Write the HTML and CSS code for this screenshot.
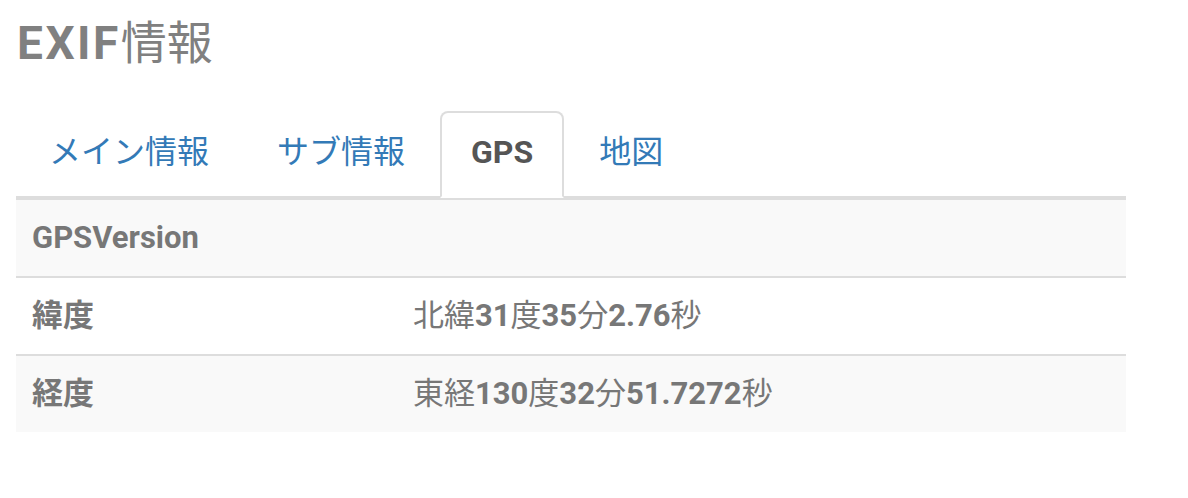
FILE: index.html
```html
<!DOCTYPE html>
<html lang="ja">
<head>
    <meta charset="UTF-8">
    <meta name="viewport" content="width=device-width, initial-scale=1.0">
    <title>EXIF情報</title>
    <link rel="stylesheet" href="styles.css">
</head>
<body>
    <div class="container">
        <h1 class="page-title"><b>EXIF</b>情報</h1>

        <ul class="tabs">
            <li><a href="#main">メイン情報</a></li>
            <li><a href="#sub">サブ情報</a></li>
            <li class="active"><a href="#gps">GPS</a></li>
            <li><a href="#map">地図</a></li>
        </ul>

        <table class="exif-table">
            <tr>
                <th>GPSVersion</th>
                <td></td>
            </tr>
            <tr>
                <th>緯度</th>
                <td>北緯<b>31</b>度<b>35</b>分<b>2.76</b>秒</td>
            </tr>
            <tr>
                <th>経度</th>
                <td>東経<b>130</b>度<b>32</b>分<b>51.7272</b>秒</td>
            </tr>
        </table>
    </div>
</body>
</html>
```

FILE: styles.css
```css
body {
    margin: 0;
    font-family: Roboto, "Noto Sans CJK JP", sans-serif;
    background-color: #ffffff;
    color: #777777;
}

.container {
    width: 1110px;
    padding: 0 16px;
}

.page-title {
    margin: 16px 0 0 1px;
    font-size: 46px;
    line-height: 54px;
    font-weight: normal;
    color: #808080;
}

.page-title b {
    font-weight: bold;
    letter-spacing: 2.5px;
}

/* タブ */
.tabs {
    list-style: none;
    margin: 41px 0 0;
    padding: 0;
    display: flex;
    border-bottom: 2px solid #dddddd;
}

.tabs li {
    margin-right: 2px;
    margin-bottom: -2px;
}

.tabs a {
    display: block;
    padding: 18px 31px 22px;
    font-size: 32px;
    line-height: 43px;
    color: #337ab7;
    text-decoration: none;
    border: 2px solid transparent;
    border-radius: 8px 8px 0 0;
}

.tabs .active a {
    padding: 18px 29px 22px;
    color: #555555;
    font-weight: bold;
    background-color: #ffffff;
    border-color: #dddddd;
    border-bottom-color: transparent;
}

/* テーブル */
.exif-table {
    width: 100%;
    border-collapse: collapse;
    font-size: 31px;
    line-height: 44px;
}

.exif-table th,
.exif-table td {
    padding: 16px;
    text-align: left;
    vertical-align: middle;
    border-top: 2px solid #dddddd;
}

.exif-table th {
    width: 349px;
    font-weight: bold;
}

.exif-table td {
    font-weight: normal;
}

.exif-table tr:nth-child(odd) {
    background-color: #f9f9f9;
}
```
